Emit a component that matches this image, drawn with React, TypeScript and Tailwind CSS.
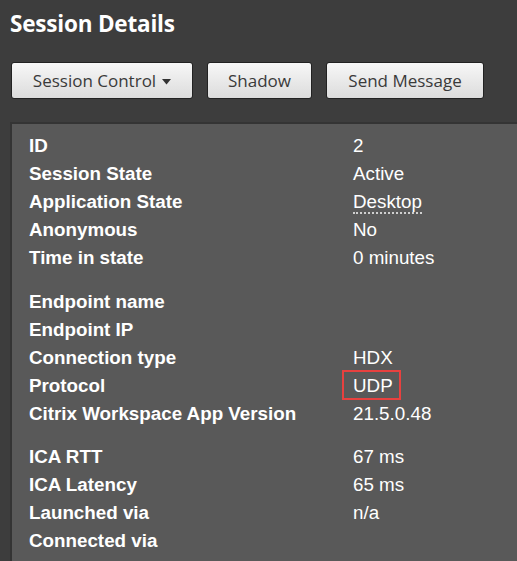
import * as React from 'react'

type Row = { label: string; value?: string; dotted?: boolean; boxed?: boolean }

const groups: Row[][] = [
  [
    { label: 'ID', value: '2' },
    { label: 'Session State', value: 'Active' },
    { label: 'Application State', value: 'Desktop', dotted: true },
    { label: 'Anonymous', value: 'No' },
    { label: 'Time in state', value: '0 minutes' },
  ],
  [
    { label: 'Endpoint name' },
    { label: 'Endpoint IP' },
    { label: 'Connection type', value: 'HDX' },
    { label: 'Protocol', value: 'UDP', boxed: true },
    { label: 'Citrix Workspace App Version', value: '21.5.0.48' },
  ],
  [
    { label: 'ICA RTT', value: '67 ms' },
    { label: 'ICA Latency', value: '65 ms' },
    { label: 'Launched via', value: 'n/a' },
    { label: 'Connected via' },
  ],
]

function Btn({ children, w }: { children: React.ReactNode; w: string }) {
  return (
    <button
      className={`${w} h-[37px] rounded-[3px] border border-[#222] bg-gradient-to-b from-[#f7f7f7] to-[#dcdcdc] text-[17px] text-[#3a3a3a] flex items-center justify-center gap-[6px]`}
      style={{ fontFamily: '"Open Sans", Lato, sans-serif' }}
    >
      {children}
    </button>
  )
}

export default function App() {
  return (
    <div
      className="w-[517px] h-[561px] overflow-hidden bg-[#3d3d3d] flex flex-col"
      style={{ fontFamily: '"Liberation Sans", Arial, sans-serif' }}
    >
      <h1
        className="pl-[10px] pt-[7px] h-[62px] text-[22.5px] font-bold text-white tracking-[-0.2px]"
        style={{ fontFamily: '"Open Sans", Lato, sans-serif' }}
      >
        Session Details
      </h1>
      <div className="flex gap-[14px] pl-[11px]">
        <Btn w="w-[182px]">
          Session Control
          <svg width="9" height="6" viewBox="0 0 9 6" className="mt-[2px]">
            <path d="M0 0h9L4.5 5.5z" fill="#333" />
          </svg>
        </Btn>
        <Btn w="w-[105px]">Shadow</Btn>
        <Btn w="w-[158px]">Send Message</Btn>
      </div>
      <div className="mt-[23px] ml-[10px] flex-1 bg-[#595959] border-t-2 border-l-2 border-[#343434] pt-[8px] pl-[17px] text-[18.8px] text-white">
        {groups.map((g, gi) => (
          <div key={gi} className={gi === 1 ? 'mt-[16px]' : gi === 2 ? 'mt-[15px]' : ''}>
            {g.map((r) => (
              <div key={r.label} className="flex h-[28px] items-center">
                <div className="w-[324px] font-bold">{r.label}</div>
                {r.value && (
                  <div className="relative h-full flex items-center">
                    <span className={r.dotted ? 'border-b-2 border-dotted border-[#cfcfcf] leading-[21px] inline-block' : ''}>
                      {r.value}
                    </span>
                    {r.boxed && (
                      <div className="absolute -left-[11px] -top-[2px] w-[59px] h-[30px] border-2 border-[#e8413f]" />
                    )}
                  </div>
                )}
              </div>
            ))}
          </div>
        ))}
      </div>
    </div>
  )
}
